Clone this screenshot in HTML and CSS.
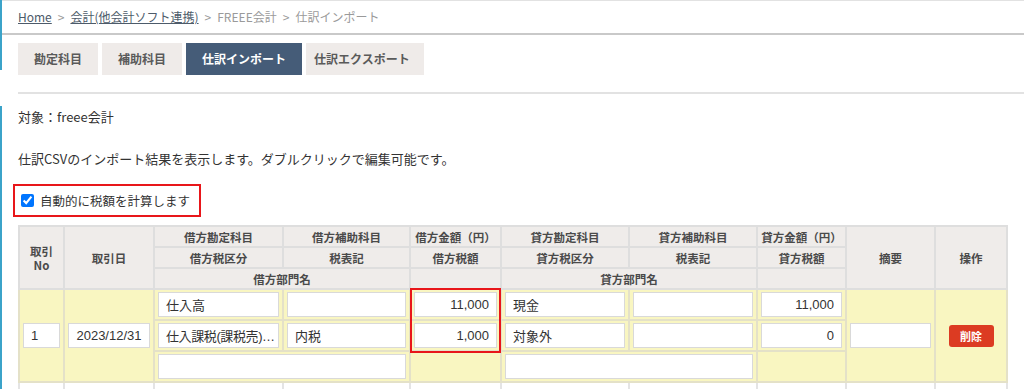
FILE: index.html
```html
<!DOCTYPE html>
<html lang="ja">
<head>
    <meta charset="UTF-8">
    <meta name="viewport" content="width=device-width, initial-scale=1.0">
    <title>仕訳インポート</title>
    <link rel="stylesheet" href="styles.css">
</head>
<body>
    <div class="page">
        <div class="rail">
            <div class="rail-top"></div>
            <div class="rail-bottom"></div>
        </div>
        <div class="main">
            <div class="breadcrumb">
                <a href="#">Home</a><span class="sep">&gt;</span><a href="#">会計(他会計ソフト連携)</a><span class="sep">&gt;</span><span class="crumb">FREEE会計</span><span class="sep">&gt;</span><span class="crumb">仕訳インポート</span>
            </div>
            <div class="tabs">
                <div class="tab">勘定科目</div>
                <div class="tab">補助科目</div>
                <div class="tab active">仕訳インポート</div>
                <div class="tab last">仕訳エクスポート</div>
            </div>
            <div class="rule"></div>
            <div class="content">
                <p class="target">対象：freee会計</p>
                <p class="note">仕訳CSVのインポート結果を表示します。ダブルクリックで編集可能です。</p>
                <label class="auto-tax">
                    <input type="checkbox" checked>
                    <span>自動的に税額を計算します</span>
                </label>

                <table class="journal">
                    <colgroup>
                        <col style="width: 45px">
                        <col style="width: 90px">
                        <col style="width: 129px">
                        <col style="width: 127px">
                        <col style="width: 91px">
                        <col style="width: 128px">
                        <col style="width: 128px">
                        <col style="width: 89px">
                        <col style="width: 89px">
                        <col style="width: 72px">
                    </colgroup>
                    <thead>
                        <tr>
                            <th rowspan="3">取引<br>No</th>
                            <th rowspan="3">取引日</th>
                            <th>借方勘定科目</th>
                            <th>借方補助科目</th>
                            <th>借方金額（円）</th>
                            <th>貸方勘定科目</th>
                            <th>貸方補助科目</th>
                            <th>貸方金額（円）</th>
                            <th rowspan="3">摘要</th>
                            <th rowspan="3">操作</th>
                        </tr>
                        <tr>
                            <th>借方税区分</th>
                            <th>税表記</th>
                            <th>借方税額</th>
                            <th>貸方税区分</th>
                            <th>税表記</th>
                            <th>貸方税額</th>
                        </tr>
                        <tr>
                            <th colspan="2">借方部門名</th>
                            <th></th>
                            <th colspan="2">貸方部門名</th>
                            <th></th>
                        </tr>
                    </thead>
                    <tbody>
                        <tr>
                            <td rowspan="3"><input class="field" type="text" value="1"></td>
                            <td rowspan="3"><input class="field center" type="text" value="2023/12/31"></td>
                            <td><input class="field" type="text" value="仕入高"></td>
                            <td><input class="field" type="text" value=""></td>
                            <td class="marked">
                                <input class="field num" type="text" value="11,000">
                                <div class="highlight"></div>
                            </td>
                            <td><input class="field" type="text" value="現金"></td>
                            <td><input class="field" type="text" value=""></td>
                            <td><input class="field num" type="text" value="11,000"></td>
                            <td rowspan="3"><input class="field" type="text" value=""></td>
                            <td rowspan="3" class="ops"><button class="delete">削除</button></td>
                        </tr>
                        <tr>
                            <td><input class="field tight" type="text" value="仕入課税(課税売)…"></td>
                            <td><input class="field" type="text" value="内税"></td>
                            <td><input class="field num" type="text" value="1,000"></td>
                            <td><input class="field" type="text" value="対象外"></td>
                            <td><input class="field" type="text" value=""></td>
                            <td><input class="field num" type="text" value="0"></td>
                        </tr>
                        <tr>
                            <td colspan="2"><input class="field" type="text" value=""></td>
                            <td></td>
                            <td colspan="2"><input class="field" type="text" value=""></td>
                            <td></td>
                        </tr>
                        <tr class="next">
                            <td></td><td></td><td></td><td></td><td></td>
                            <td></td><td></td><td></td><td></td><td></td>
                        </tr>
                    </tbody>
                </table>
            </div>
        </div>
    </div>
</body>
</html>
```

FILE: styles.css
```css
body {
    margin: 0;
    padding: 0;
    background-color: #fff;
    color: #333;
    font-family: "Noto Sans CJK JP", "Noto Sans", sans-serif;
    font-size: 13px;
    overflow: hidden;
}
.page {
    display: flex;
    height: 389px;
    overflow: hidden;
}
.rail {
    width: 2px;
    display: flex;
    flex-direction: column;
}
.rail-top {
    height: 70px;
    background-color: #3ba3c9;
}
.rail-bottom {
    flex: 1;
    margin-top: 36px;
    background-color: #3ba3c9;
}
.main {
    flex: 1;
}
.breadcrumb {
    height: 32px;
    line-height: 32px;
    padding-left: 16px;
    font-size: 12px;
    border-top: 1px solid #e2e2e2;
    border-bottom: 2px solid #c9c9c9;
    color: #9a9a9a;
}
.breadcrumb a {
    color: #4d5b6a;
    text-decoration: underline;
}
.breadcrumb .sep {
    margin: 0 6px;
    color: #9a9a9a;
}
.tabs {
    display: flex;
    gap: 4px;
    margin-top: 8px;
    padding-left: 16px;
}
.tab {
    height: 32px;
    line-height: 32px;
    padding: 0 16px;
    background-color: #efebe9;
    color: #5a5a5a;
    font-size: 12px;
    font-weight: bold;
}
.tab.last {
    padding: 0 14px 0 8px;
}
.tab.active {
    background-color: #455c78;
    color: #fff;
}
.rule {
    margin: 17px 0 0 16px;
    height: 0;
    border-top: 2px solid #e2e2e2;
}
.content {
    padding-left: 16px;
}
.target {
    margin: 13px 0 0;
    line-height: 20px;
}
.note {
    margin: 22px 0 0;
    line-height: 20px;
}
.auto-tax {
    display: inline-flex;
    align-items: center;
    margin: 15px 0 0 -5px;
    width: 178px;
    height: 29px;
    border: 2px solid #e8161a;
    padding-left: 6px;
    gap: 6px;
    font-size: 12.5px;
}
.auto-tax input {
    width: 13px;
    height: 13px;
    margin: 0;
}
.journal {
    margin-top: 8px;
    width: 988px;
    table-layout: fixed;
    border-collapse: collapse;
    border: 2px solid #dedede;
}
.journal th {
    background-color: #efecea;
    color: #4a4a4a;
    font-size: 11.5px;
    font-weight: bold;
    height: 17px;
    line-height: 14px;
    padding: 1px 2px;
    border: 2px solid #dedede;
    text-align: center;
}
.journal td {
    background-color: #f9f6c1;
    border: 2px solid #e4e1c8;
    height: 29px;
    padding: 0 3px;
    vertical-align: middle;
}
.journal tr.next td {
    background-color: #fff;
    border-color: #e4e4e4;
}
.field {
    display: block;
    box-sizing: border-box;
    width: 100%;
    height: 25px;
    border: 1px solid #d9d9d9;
    background-color: #fff;
    padding: 0 7px;
    font-family: "Liberation Sans", "Noto Sans CJK JP", sans-serif;
    font-size: 13px;
    color: #333;
    outline: none;
}
.field.tight {
    padding: 0 2px 0 7px;
    letter-spacing: -0.4px;
}
.field.num {
    text-align: right;
}
.field.center {
    text-align: center;
}
.marked {
    position: relative;
}
.highlight {
    position: absolute;
    left: -1px;
    top: -2px;
    width: 87px;
    height: 61px;
    border: 2px solid #e8161a;
    pointer-events: none;
}
.ops {
    text-align: center;
}
.delete {
    width: 45px;
    height: 22px;
    border: none;
    border-radius: 3px;
    background-color: #dc3b22;
    color: #fff;
    font-family: "Noto Sans CJK JP", sans-serif;
    font-size: 11px;
    font-weight: bold;
    padding: 0;
}
```
